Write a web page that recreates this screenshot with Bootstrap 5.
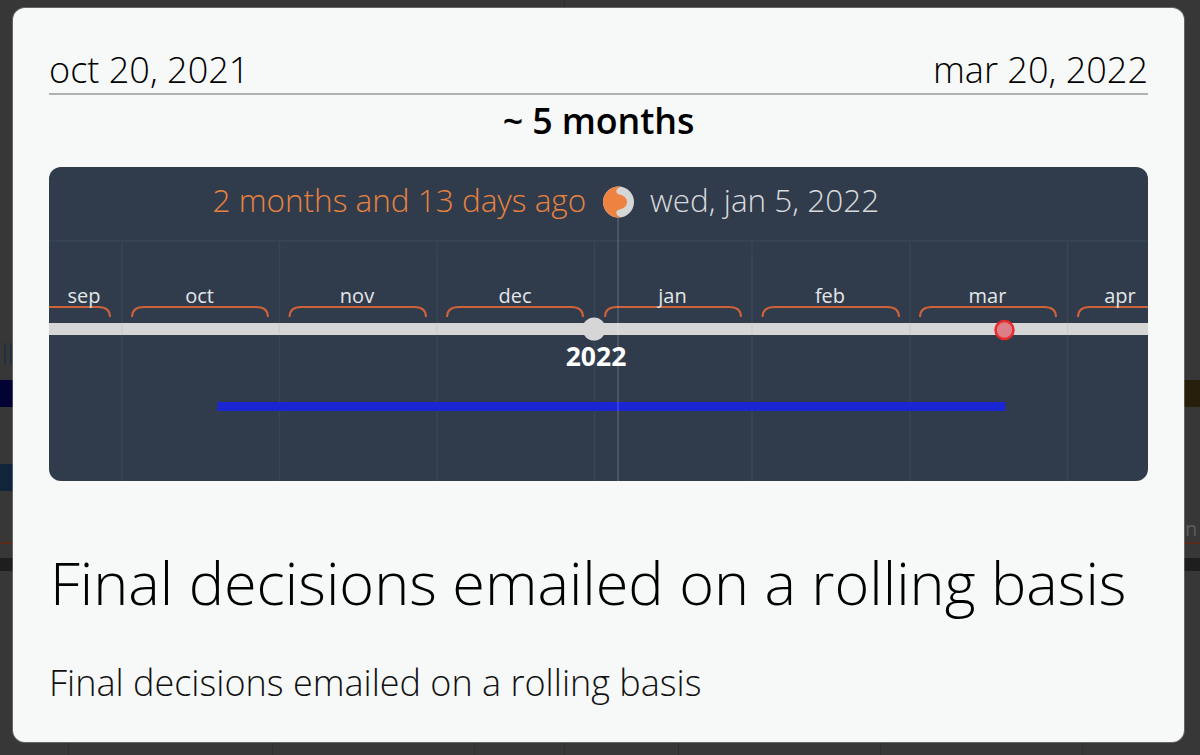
<!DOCTYPE html>
<html lang="en">
<head>
<meta charset="utf-8">
<title>Timeline</title>
<link href="https://cdn.jsdelivr.net/npm/bootstrap@5.3.0/dist/css/bootstrap.min.css" rel="stylesheet">
<style>
html,body{height:100%;margin:0}
body{background:#373737;font-family:"Open Sans",sans-serif;overflow:hidden;position:relative}
.backdrop-bit{position:absolute}
.back-text{position:absolute;font-size:20px;line-height:1;font-weight:400}
.stage{height:755px;padding:8px 16px 13px 13px}
.sheet{height:734px;background:#f7f9f9;border-radius:12px;padding:0 36px;color:#000;font-weight:300;position:relative;box-shadow:0 0 0 1px rgba(190,190,190,.35)}
.range-row{height:87px;font-size:36.1px;border-bottom:2px solid #b0b0b0;line-height:1}
.range-row span{padding-bottom:6px}
.range-len{font-size:35.8px;font-weight:600;line-height:1;text-align:center;height:72px;padding-top:8px;color:#000;letter-spacing:-.1px}
.tl{height:314px;background:#303c4c;border-radius:12px;overflow:hidden;position:relative}
.tl svg{display:block}
.tl-head{font-size:31.5px;font-family:"Open Sans",sans-serif;font-weight:300}
.tl-mon{font-size:20px;font-family:"Open Sans",sans-serif;font-weight:400;fill:#e4e6e8;text-anchor:middle}
.tl-year{font-size:26.5px;font-family:"Open Sans",sans-serif;font-weight:700;fill:#fff;text-anchor:middle}
.big-title{font-size:59.4px;font-weight:300;line-height:1;margin:0;padding-top:72px;padding-left:1px;color:#000}
.sub-title{font-size:36px;font-weight:300;line-height:1;margin:0;padding-top:53px;color:#111}
</style>
</head>
<body>
<div class="backdrop-bit" style="left:0;top:380px;width:13px;height:27px;background:#020233"></div>
<div class="backdrop-bit" style="left:0;top:464px;width:13px;height:27px;background:#10243a"></div>
<div class="backdrop-bit" style="left:0;top:542px;width:13px;height:2px;background:#5a2a1a"></div>
<div class="backdrop-bit" style="left:0;top:558px;width:13px;height:13px;background:#1e1e1e"></div>
<div class="backdrop-bit" style="left:1184px;top:380px;width:16px;height:27px;background:#271f0c"></div>
<div class="backdrop-bit" style="left:1184px;top:542px;width:16px;height:2px;background:#5a2a1a"></div>
<div class="backdrop-bit" style="left:1184px;top:558px;width:16px;height:13px;background:#1e1e1e"></div>
<div class="backdrop-bit" style="left:564px;top:0;width:1px;height:8px;background:#2f2f2f"></div>
<div class="backdrop-bit" style="left:68px;top:742px;width:1px;height:13px;background:#2f2f2f"></div>
<div class="backdrop-bit" style="left:272px;top:742px;width:1px;height:13px;background:#2f2f2f"></div>
<div class="backdrop-bit" style="left:474px;top:742px;width:1px;height:13px;background:#2f2f2f"></div>
<div class="backdrop-bit" style="left:564px;top:742px;width:1px;height:13px;background:#2f2f2f"></div>
<div class="backdrop-bit" style="left:678px;top:742px;width:1px;height:13px;background:#2f2f2f"></div>
<div class="backdrop-bit" style="left:880px;top:742px;width:1px;height:13px;background:#2f2f2f"></div>
<div class="backdrop-bit" style="left:1082px;top:742px;width:1px;height:13px;background:#2f2f2f"></div>
<div class="backdrop-bit" style="left:4px;top:343px;width:2px;height:22px;background:#1f3040"></div>
<div class="backdrop-bit" style="left:10px;top:343px;width:2px;height:22px;background:#1f3040"></div>
<span class="back-text" style="left:1185px;top:519px;color:#5c5c5c">n</span>
<div class="stage">
  <div class="sheet">
    <div class="range-row d-flex justify-content-between align-items-end">
      <span>oct 20, 2021</span><span>mar 20, 2022</span>
    </div>
    <div class="range-len">~ 5 months</div>
    <div class="tl">
      <svg width="1099" height="314" viewBox="49 167 1099 314" xmlns="http://www.w3.org/2000/svg">
        <g stroke="#384556" stroke-width="1.5" fill="none">
          <path d="M49 241H1148M122 241V481M279.500 241V481M437 241V481M594.500 241V481M752 241V481M910 241V481M1067.500 241V481"/>
        </g>
        <rect x="49" y="323" width="1099" height="12" fill="#d6d6d6"/>
        <g stroke="#cdcdcd" stroke-width="1.5" fill="none">
          <path d="M122 323V335M279.500 323V335M437 323V335M752 323V335M910 323V335M1067.500 323V335"/>
        </g>
        <g stroke="#d0623a" stroke-width="2" fill="none">
          <path d="M49 307H98Q110 307 110 317"/>
          <path d="M132 317Q132 307 144 307H256Q268 307 268 317"/>
          <path d="M289.500 317Q289.500 307 301.500 307H414Q426 307 426 317"/>
          <path d="M447 317Q447 307 459 307H571Q583 307 583 317"/>
          <path d="M605 317Q605 307 617 307H729Q741 307 741 317"/>
          <path d="M762.500 317Q762.500 307 774.500 307H887Q899 307 899 317"/>
          <path d="M920 317Q920 307 932 307H1044Q1056 307 1056 317"/>
          <path d="M1078 317Q1078 307 1090 307H1148"/>
        </g>
        <text class="tl-mon" x="84" y="303">sep</text>
        <text class="tl-mon" x="199.500" y="303">oct</text>
        <text class="tl-mon" x="357" y="303">nov</text>
        <text class="tl-mon" x="515" y="303">dec</text>
        <text class="tl-mon" x="672.500" y="303">jan</text>
        <text class="tl-mon" x="830" y="303">feb</text>
        <text class="tl-mon" x="987.500" y="303">mar</text>
        <text class="tl-mon" x="1120" y="303">apr</text>
        <circle cx="594" cy="329" r="11.500" fill="#d6d6d6"/>
        <text class="tl-year" x="596" y="366">2022</text>
        <rect x="217.500" y="402" width="788" height="9" fill="#1a25d4"/>
        <path d="M618 218V481" stroke="#fff" stroke-opacity=".17" stroke-width="1.500"/>
        <circle cx="1004.500" cy="330" r="9" fill="#dd7f88" stroke="#e92a2a" stroke-width="2.500"/>
        <text class="tl-head" x="212.500" y="212" fill="#e9823f">2 months and 13 days ago</text>
        <text class="tl-head" x="650" y="212" fill="#d8dadc">wed, jan 5, 2022</text>
        <circle cx="618.500" cy="202" r="15.500" fill="#d6d6d6"/>
        <path d="M621 186.700A15.500 15.500 0 1 0 621 217.300C615 215.500 615 210.500 619.500 209.500C624 208.500 627 206 627 202C627 198 624 195.500 619.500 194.500C615 193.500 615 188.500 621 186.700Z" fill="#ee8341"/>
      </svg>
    </div>
    <h1 class="big-title">Final decisions emailed on a rolling basis</h1>
    <p class="sub-title">Final decisions emailed on a rolling basis</p>
  </div>
</div>
</body>
</html>
